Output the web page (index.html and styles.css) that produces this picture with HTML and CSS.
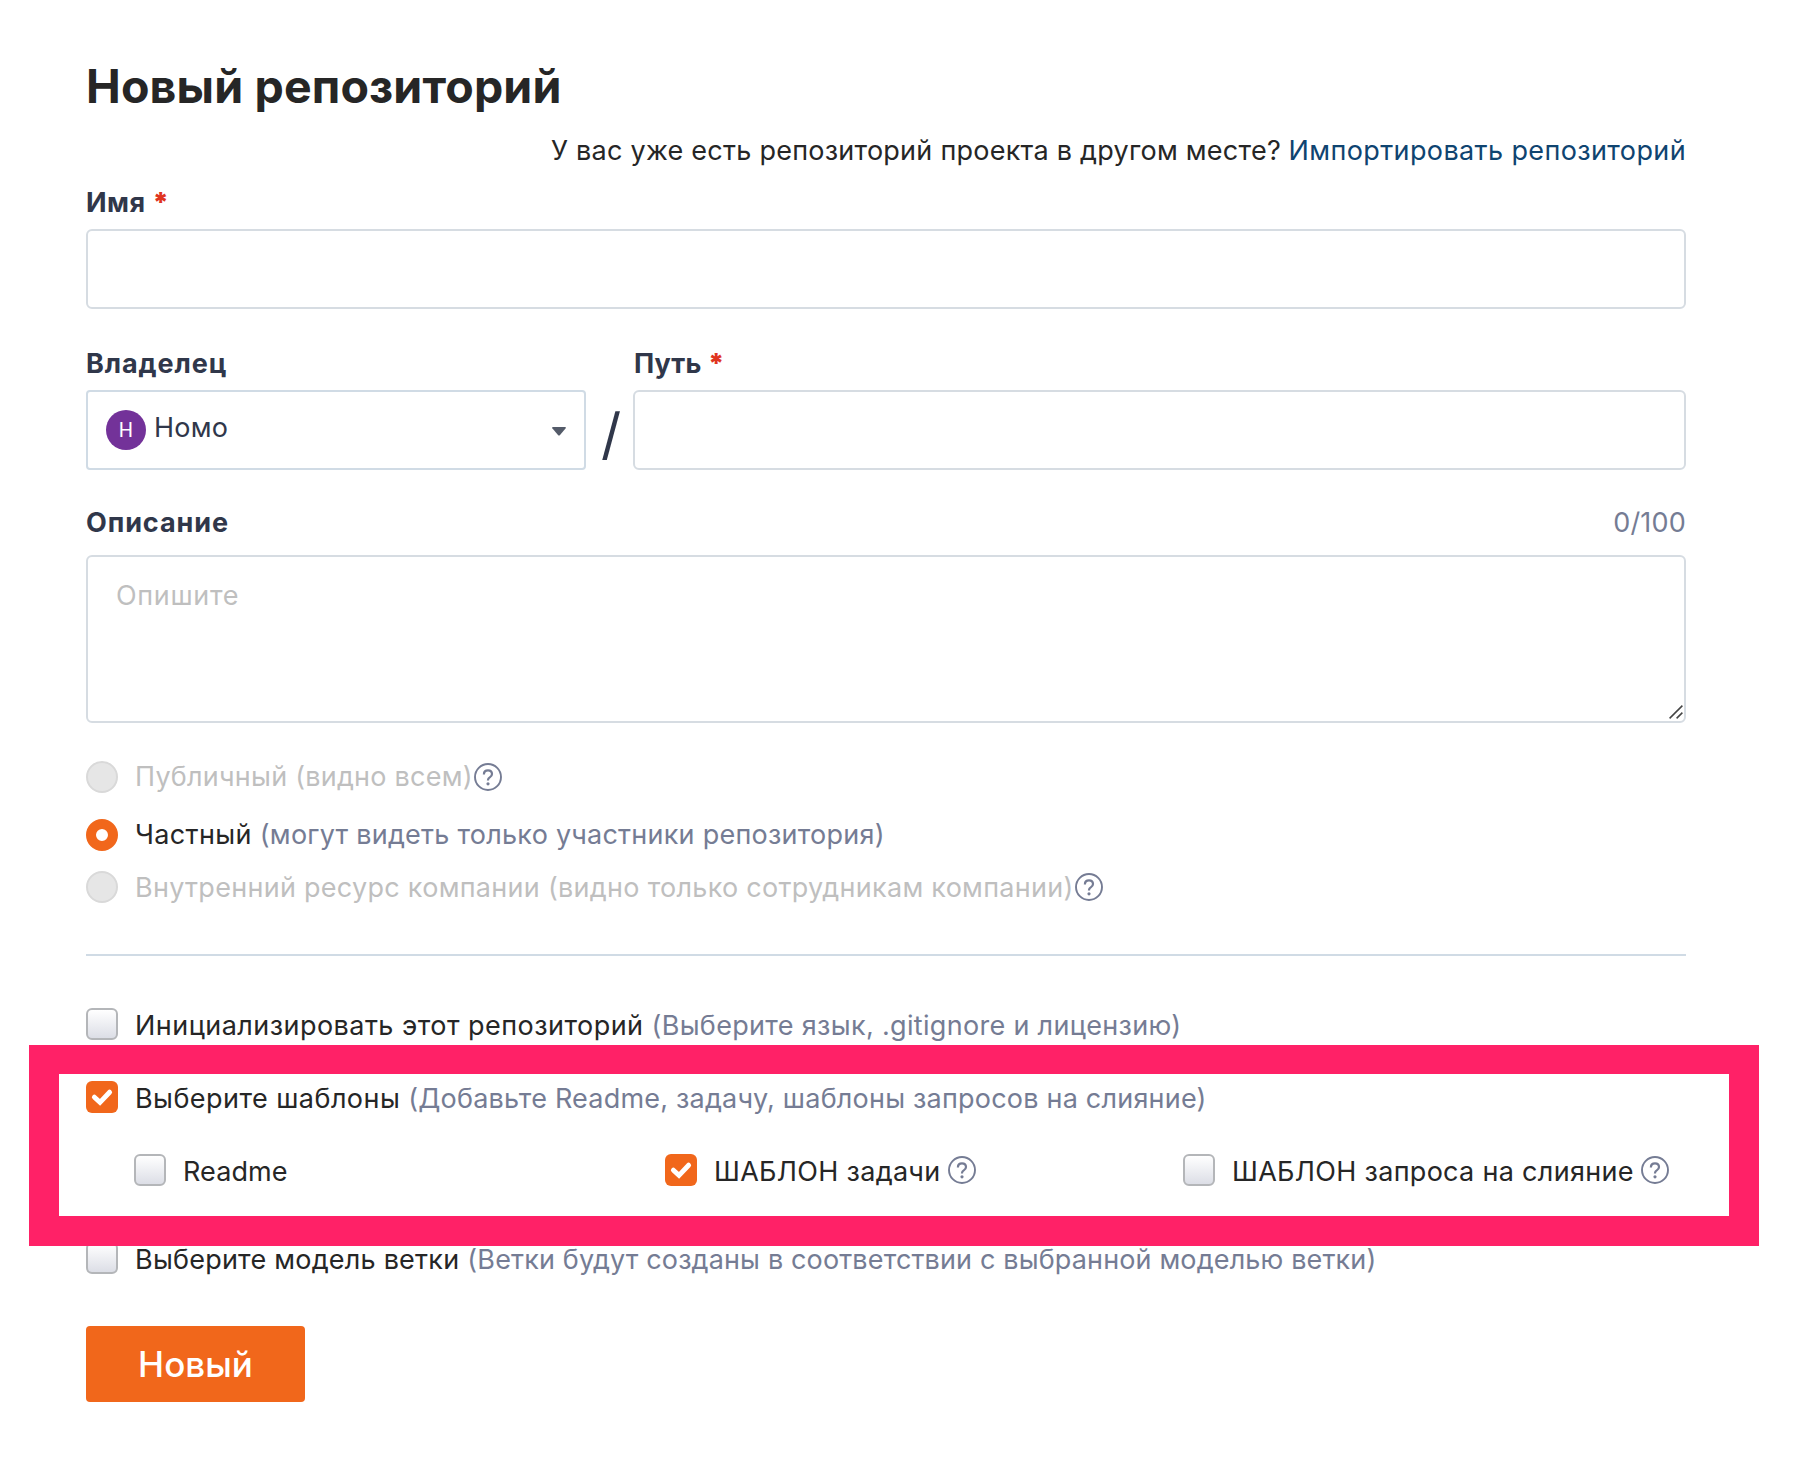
FILE: index.html
```html
<!DOCTYPE html>
<html lang="ru">
<head>
<meta charset="utf-8">
<title>Новый репозиторий</title>
<link rel="stylesheet" href="styles.css">
</head>
<body>
<svg class="sprite" aria-hidden="true">
  <symbol id="help" viewBox="0 0 28 28">
    <circle cx="14" cy="14" r="13" fill="none" stroke="currentColor" stroke-width="1.9"/>
    <path d="M9.9 11.4c0-2.5 1.7-4 4.1-4s4 1.5 4 3.6c0 1.5-.8 2.3-2 3.1-1.3.8-2 1.5-2 2.9v.5" fill="none" stroke="currentColor" stroke-width="2.2"/>
    <circle cx="14" cy="20.8" r="1.6" fill="currentColor"/>
  </symbol>
  <symbol id="check" viewBox="0 0 32 32">
    <path d="M8.4 16.2L14 21.4L23.6 11.2" fill="none" stroke="#fff" stroke-width="4.9" stroke-linecap="round" stroke-linejoin="miter"/>
  </symbol>
</svg>
<form class="page">
  <h1 class="title">Новый репозиторий</h1>
  <p class="import"><span class="question">У вас уже есть репозиторий проекта в другом месте?</span> <a class="link">Импортировать репозиторий</a></p>

  <label class="label name">Имя <b class="req">*</b></label>
  <div class="input"></div>

  <div class="owner-row">
    <div class="owner">
      <label class="label wide">Владелец</label>
      <div class="input select">
        <span class="avatar">Н</span>
        <span class="owner-name">Номо</span>
        <svg class="caret" viewBox="0 0 14 9"><path d="M.6 0h12.8q.8.6.3 1.3L7.8 8.2q-.8.8-1.6 0L.3 1.3Q-.2.6.6 0z" fill="#545b69"/></svg>
      </div>
    </div>
    <span class="slash">/</span>
    <div class="path">
      <label class="label">Путь <b class="req">*</b></label>
      <div class="input"></div>
    </div>
  </div>

  <div class="desc-head">
    <label class="label wide">Описание</label>
    <span class="count">0/100</span>
  </div>
  <div class="textarea">
    <span class="placeholder">Опишите</span>
    <svg class="grip" viewBox="0 0 14 14"><path d="M.6 13.4L13.4.6M7.6 13.4L13.4 7.6" stroke="#444" stroke-width="1.5" fill="none"/></svg>
  </div>

  <div class="radios">
    <div class="row disabled public"><i class="radio"></i><span class="text">Публичный (видно всем)</span><svg class="help"><use href="#help"/></svg></div>
    <div class="row private"><i class="radio on"></i><span class="text">Частный</span><span class="hint">(могут видеть только участники репозитория)</span></div>
    <div class="row disabled internal"><i class="radio"></i><span class="text">Внутренний ресурс компании (видно только сотрудникам компании)</span><svg class="help"><use href="#help"/></svg></div>
  </div>

  <div class="divider"></div>

  <div class="checks">
    <div class="row init"><i class="box"></i><span class="text">Инициализировать этот репозиторий</span><span class="hint">(Выберите язык, .gitignore и лицензию)</span></div>
    <div class="row choose"><svg class="box on"><use href="#check"/></svg><span class="text">Выберите шаблоны</span><span class="hint">(Добавьте Readme, задачу, шаблоны запросов на слияние)</span></div>
    <div class="templates">
      <div class="row readme"><i class="box"></i><span class="text">Readme</span></div>
      <div class="row"><svg class="box on"><use href="#check"/></svg><span class="text">ШАБЛОН задачи</span><svg class="help"><use href="#help"/></svg></div>
      <div class="row"><i class="box"></i><span class="text">ШАБЛОН запроса на слияние</span><svg class="help"><use href="#help"/></svg></div>
    </div>
    <div class="row branch"><i class="box"></i><span class="text">Выберите модель ветки</span><span class="hint">(Ветки будут созданы в соответствии с выбранной моделью ветки)</span></div>
  </div>

  <button class="submit" type="button">Новый</button>
</form>
<div class="highlight"></div>
</body>
</html>
```
FILE: styles.css
```css
* { box-sizing: border-box; }

body {
  margin: 0;
  background: #fff;
  color: #262626;
  font-family: Inter, "Liberation Sans", sans-serif;
  font-size: 27px;
  line-height: 40px;
}

.sprite { position: absolute; width: 0; height: 0; }

.page {
  display: flex;
  flex-direction: column;
  width: 1600px;
  margin: 0 0 0 86px;
  padding-top: 56px;
  white-space: nowrap;
}

.title { margin: 0; font-size: 46.5px; line-height: 60px; font-weight: 700; letter-spacing: .15px; }

.import { margin: 15px 0 12px; text-align: right; }
.question { letter-spacing: .25px; }
.link { color: #0f4470; letter-spacing: .38px; }

.label { display: block; height: 40px; margin-bottom: 6px; color: #30374a; font-weight: 700; letter-spacing: .1px; }
.label.name { letter-spacing: .5px; }
.label.wide { letter-spacing: .9px; }
.req { color: #e0351f; }

.input, .textarea { height: 80px; border: 2px solid #d6dce2; border-radius: 6px; }

.owner-row { display: flex; margin-top: 35px; }
.owner { width: 500px; }
.path { width: 1053px; }
.path .label { padding-left: 1px; }
.slash {
  width: 47px;
  padding: 57px 0 0 3px;
  text-align: center;
  color: #30374a;
  font-size: 56px;
  line-height: 66px;
  font-weight: 400;
}

.select { display: flex; align-items: center; padding: 0 18px 0 18px; border-color: #d0dbe5; border-radius: 4px; color: #30374a; }
.avatar {
  width: 40px;
  height: 40px;
  border-radius: 50%;
  background: #733299;
  color: #fff;
  font: 20px/40px Roboto, sans-serif;
  text-align: center;
}
.owner-name { margin: 0 auto 4px 8px; letter-spacing: .2px; }
.caret { width: 14px; height: 9px; margin-top: 2px; }

.desc-head { display: flex; justify-content: space-between; height: 40px; margin: 33px 0 12px; }
.count { color: #757c94; letter-spacing: .2px; }

.textarea { position: relative; height: 168px; padding: 19px 28px; }
.placeholder { color: #bfbfbf; letter-spacing: .65px; }
.grip { position: absolute; right: 1px; bottom: 2px; width: 14px; height: 14px; }

.row { display: flex; align-items: center; height: 32px; }
.text { margin-left: 17px; }
.hint { margin-left: 8px; color: #757c94; }
.disabled .text { color: #bfbfbf; }

.help { width: 28px; height: 28px; color: #757c94; margin-left: 1px; }

.radios { margin-top: 38px; }
.radios .help { margin-bottom: 1px; }
.public .text { letter-spacing: .23px; }
.private { margin: 26px 0 20px; }
.private .text { letter-spacing: .35px; }
.private .hint { letter-spacing: .24px; }
.internal .text { letter-spacing: .28px; padding-top: 2px; }
.radio { width: 32px; height: 32px; border: 2px solid #d9d9d9; border-radius: 50%; background: #e6e6e6; }
.radio.on { border: 10px solid #f1671b; background: #fff; }

.divider { height: 2px; margin-top: 51px; background: #d0dbe5; }

.checks { margin-top: 52px; }
.checks .text, .checks .hint { padding-top: 4px; }
.box { width: 32px; height: 32px; border: 2px solid #b4b6b9; border-radius: 6px; background: linear-gradient(#fff, #dcdee6); }
.box.on { border: 0; background: #f1671b; }
.init .text { letter-spacing: .46px; }
.init .hint { letter-spacing: .32px; }
.choose { margin: 41px 0; }
.choose .text { letter-spacing: .44px; }
.choose .hint { letter-spacing: .21px; }
.templates { display: grid; grid-template-columns: 531px 518px auto; padding-left: 48px; letter-spacing: .3px; }
.templates .readme { letter-spacing: .1px; }
.templates .help { margin-left: 7.5px; }
.branch { margin-top: 56px; }
.branch .text { letter-spacing: .22px; }
.branch .hint { letter-spacing: .14px; }

.submit {
  width: 219px;
  height: 76px;
  margin-top: 52px;
  padding: 0;
  border: 0;
  border-radius: 4px;
  background: #f1671b;
  color: #fff;
  font: 500 35px/76px Inter, sans-serif;
}

/* Callout frame drawn over the form */
.highlight {
  position: absolute;
  left: 29px;
  top: 1045px;
  width: 1730px;
  height: 201px;
  border: solid #ff2167;
  border-width: 29px 30px 30px;
}
```
